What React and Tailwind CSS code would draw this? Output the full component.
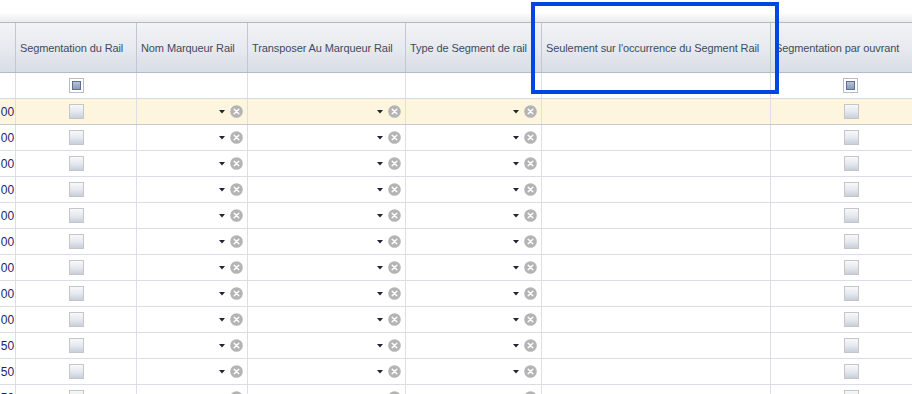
import React from "react";

const W = ["w-[16px]", "w-[121px]", "w-[111px]", "w-[158px]", "w-[136px]", "w-[229px]", "w-[160px]"];

function Check({ filter }) {
  if (filter) {
    return (
      <div className="w-[15px] h-[15px] border border-[#b7bcc6] bg-white p-[2px]">
        <div className="w-full h-full border border-[#5f6f92] bg-gradient-to-b from-[#b9c2d6] to-[#8c9abb]" />
      </div>
    );
  }
  return (
    <div className="w-[15px] h-[15px] border border-[#c6c6c6] bg-gradient-to-b from-[#f7f8fa] via-[#e6e9ef] to-[#c9cfdb]" />
  );
}

function Drop() {
  return (
    <div className="flex items-center justify-end h-full pr-[4px] gap-[5px]">
      <svg width="6" height="4" viewBox="0 0 6 4">
        <path d="M0 0 L6 0 L3 3.5 Z" fill="#1f2533" />
      </svg>
      <svg width="13" height="13" viewBox="0 0 13 13">
        <circle cx="6.5" cy="6.5" r="6.3" fill="#b4b4b4" />
        <path d="M4.2 4.2 L8.8 8.8 M8.8 4.2 L4.2 8.8" stroke="#ffffff" strokeWidth="1.4" strokeLinecap="round" />
      </svg>
    </div>
  );
}

const headers = [
  "",
  "Segmentation du Rail",
  "Nom Marqueur Rail",
  "Transposer Au Marqueur Rail",
  "Type de Segment de rail",
  "Seulement sur l'occurrence du Segment Rail",
  "Segmentation par ouvrant",
];

const values = ["00", "00", "00", "00", "00", "00", "00", "00", "00", "50", "50", "50"];

export default function App() {
  return (
    <div
      className="relative w-[912px] h-[394px] overflow-hidden bg-white text-[11px] tracking-[-0.1px]"
      style={{ fontFamily: '"Liberation Sans", Arial, sans-serif' }}
    >
      <div className="h-[14px] bg-white" />
      <div className="h-[8px] bg-gradient-to-b from-[#fbfbfb] to-[#ececec]" />
      {/* header */}
      <div className="flex h-[51px] border-t border-b border-[#b3bac7] bg-gradient-to-b from-[#f1f3f6] via-[#e7eaef] to-[#d9dde5]">
        {headers.map((h, i) => (
          <div
            key={i}
            className={`${W[i]} shrink-0 h-full border-r border-[#c2c8d3] flex items-center pl-[4px] pt-[1px] text-[#414b5e] whitespace-nowrap overflow-hidden`}
          >
            {h}
          </div>
        ))}
      </div>
      {/* filter row */}
      <div className="flex h-[26px] border-b border-[#d6d9e0]">
        {headers.map((_, i) => (
          <div key={i} className={`${W[i]} shrink-0 h-full border-r border-[#dcdfe7] flex items-center justify-center`}>
            {(i === 1 || i === 6) && <Check filter />}
          </div>
        ))}
      </div>
      {values.map((v, r) => (
        <div
          key={r}
          className={`flex h-[26px] border-b ${r === 0 ? "bg-[#fef5df] border-[#c9c9c9]" : "border-[#dadde4]"}`}
        >
          <div className={`${W[0]} shrink-0 h-full border-r border-[#dcdfe7] flex items-center justify-end text-[12px] text-[#1d1d70] overflow-hidden`}>
            <span className="pr-[1px]">{v}</span>
          </div>
          <div className={`${W[1]} shrink-0 h-full border-r border-[#dcdfe7] flex items-center justify-center`}>
            <Check />
          </div>
          <div className={`${W[2]} shrink-0 h-full border-r border-[#dcdfe7]`}>
            <Drop />
          </div>
          <div className={`${W[3]} shrink-0 h-full border-r border-[#dcdfe7]`}>
            <Drop />
          </div>
          <div className={`${W[4]} shrink-0 h-full border-r border-[#dcdfe7]`}>
            <Drop />
          </div>
          <div className={`${W[5]} shrink-0 h-full border-r border-[#dcdfe7]`} />
          <div className={`${W[6]} shrink-0 h-full flex items-center justify-center`}>
            <Check />
          </div>
        </div>
      ))}
      {/* highlight box */}
      <div className="absolute left-[531px] top-[2px] w-[248px] h-[92px] border-[4px] border-[#0046e0]" />
    </div>
  );
}
